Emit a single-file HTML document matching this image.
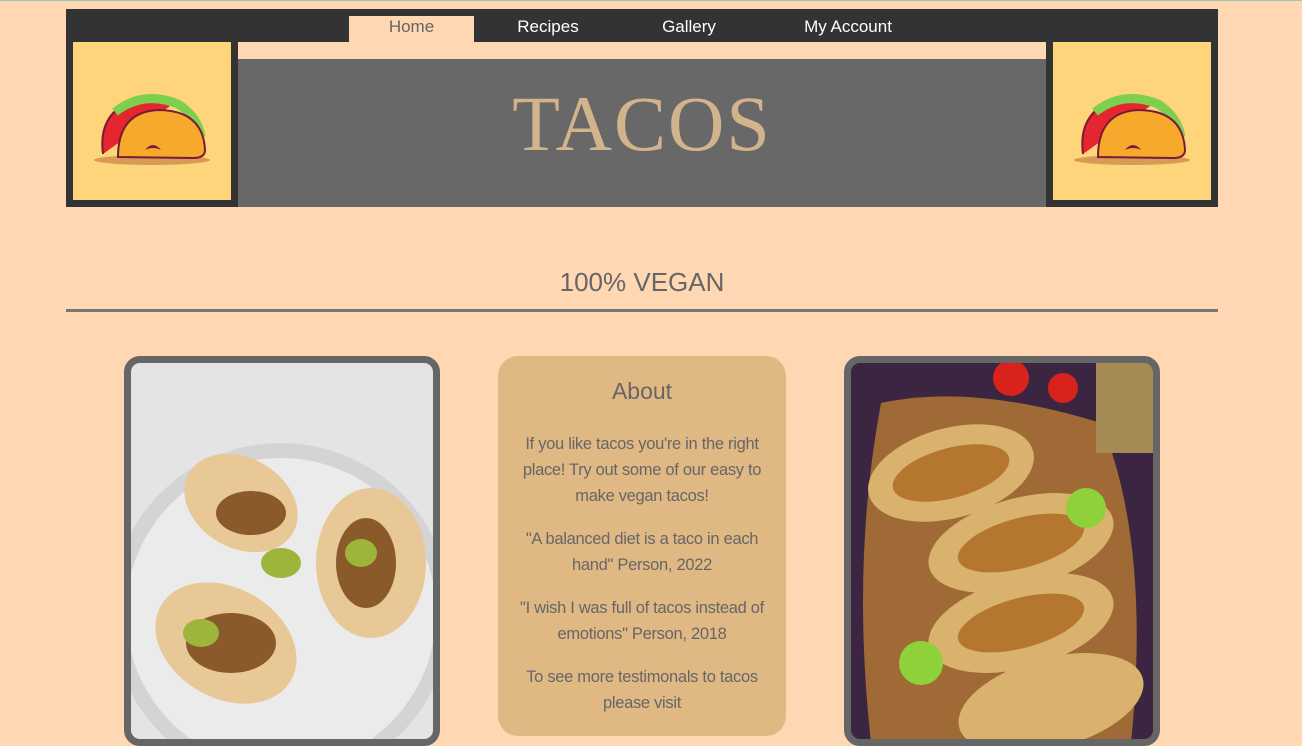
<!DOCTYPE html>
<html><head><meta charset="utf-8"><style>
*{margin:0;padding:0;box-sizing:border-box}
body{width:1302px;height:730px;overflow:hidden;background:#ffd7b3;font-family:"Liberation Sans",sans-serif;color:#666;position:relative}
.abs{position:absolute}
.nav{left:66px;top:9px;width:1152px;height:33px;background:#333}
.nav span{position:absolute;top:8px;font-size:17px;color:#fff;text-align:center}
.tab{left:349px;top:16px;width:125px;height:26px;background:#ffd7b3}
.dark{background:#333}
h1{position:absolute;left:238px;top:79px;width:808px;text-align:center;font-family:"Liberation Serif",serif;font-weight:normal;font-size:78px;color:#d2b48c;letter-spacing:2px}
.card{border:7px solid #666;border-radius:16px;overflow:hidden;background:#666}
.about{left:498px;top:356px;width:288px;height:380px;background:#e0b884;border-radius:20px;text-align:center;padding:0 12px}
.about h3{font-weight:normal;font-size:23px;margin-top:22px;margin-bottom:26px}
.about p{font-size:16.5px;line-height:26px;margin-bottom:17px;letter-spacing:-0.3px}
</style></head><body>
<div class="abs" style="left:0;top:0;width:1302px;height:1px;background:#9cc7b0"></div>
<div class="abs nav">
<span style="left:432px;width:100px">Recipes</span>
<span style="left:573px;width:100px">Gallery</span>
<span style="left:722px;width:120px">My Account</span>
</div>
<div class="abs tab"><span style="position:absolute;top:1px;left:0;width:125px;text-align:center;font-size:17px;color:#666">Home</span></div>
<div class="abs dark" style="left:66px;top:42px;width:172px;height:165px"></div>
<div class="abs dark" style="left:1046px;top:42px;width:172px;height:165px"></div>
<div class="abs" style="left:238px;top:59px;width:808px;height:148px;background:#686868"></div>
<h1>TACOS</h1>
<svg class="abs" style="left:73px;top:42px" width="158" height="158" viewBox="0 0 158 158"><rect width="158" height="158" fill="#ffd57c"/>
<ellipse cx="79" cy="118" rx="58" ry="5" fill="#d99a55"/>
<path d="M30 112 Q25 75 55 60 Q80 52 100 62" fill="#e5262f" stroke="#7a1a3a" stroke-width="2"/>
<path d="M42 70 Q70 48 105 62 Q125 75 128 95" fill="none" stroke="#7ccf4f" stroke-width="9"/>
<path d="M45 115 Q45 70 85 68 Q130 68 132 108 Q132 116 120 116 Z" fill="#f7a92c" stroke="#7a1a3a" stroke-width="2"/>
<path d="M72 108 Q80 98 88 108 Q80 104 72 108Z" fill="#7a1a3a"/>
</svg>
<svg class="abs" style="left:1053px;top:42px" width="158" height="158" viewBox="0 0 158 158"><rect width="158" height="158" fill="#ffd57c"/>
<ellipse cx="79" cy="118" rx="58" ry="5" fill="#d99a55"/>
<path d="M30 112 Q25 75 55 60 Q80 52 100 62" fill="#e5262f" stroke="#7a1a3a" stroke-width="2"/>
<path d="M42 70 Q70 48 105 62 Q125 75 128 95" fill="none" stroke="#7ccf4f" stroke-width="9"/>
<path d="M45 115 Q45 70 85 68 Q130 68 132 108 Q132 116 120 116 Z" fill="#f7a92c" stroke="#7a1a3a" stroke-width="2"/>
<path d="M72 108 Q80 98 88 108 Q80 104 72 108Z" fill="#7a1a3a"/>
</svg>
<div class="abs" style="left:66px;top:267px;width:1152px;text-align:center;font-size:26px;color:#666">100% VEGAN</div>
<div class="abs" style="left:66px;top:309px;width:1152px;height:3px;background:#777"></div>

<div class="abs card" style="left:124px;top:356px;width:316px;height:390px">
<svg width="302" height="380" viewBox="0 0 302 380"><rect width="302" height="380" fill="#e4e4e4"/>
<ellipse cx="150" cy="250" rx="170" ry="170" fill="#d4d4d4"/>
<ellipse cx="150" cy="250" rx="155" ry="155" fill="#ebebeb"/>
<ellipse cx="110" cy="140" rx="60" ry="45" fill="#e8c896" transform="rotate(30 110 140)"/>
<ellipse cx="240" cy="200" rx="55" ry="75" fill="#e8c896"/>
<ellipse cx="95" cy="280" rx="75" ry="55" fill="#e8c896" transform="rotate(30 95 280)"/>
<ellipse cx="120" cy="150" rx="35" ry="22" fill="#8a5a2a"/>
<ellipse cx="235" cy="200" rx="30" ry="45" fill="#8a5a2a"/>
<ellipse cx="100" cy="280" rx="45" ry="30" fill="#8a5a2a"/>
<ellipse cx="150" cy="200" rx="20" ry="15" fill="#9cb53a"/>
<ellipse cx="230" cy="190" rx="16" ry="14" fill="#9cb53a"/>
<ellipse cx="70" cy="270" rx="18" ry="14" fill="#9cb53a"/>
</svg></div>

<div class="abs about">
<h3>About</h3>
<p>If you like tacos you're in the right place! Try out some of our easy to make vegan tacos!</p>
<p>"A balanced diet is a taco in each hand" Person, 2022</p>
<p>"I wish I was full of tacos instead of emotions" Person, 2018</p>
<p>To see more testimonals to tacos please visit</p>
</div>

<div class="abs card" style="left:844px;top:356px;width:316px;height:390px">
<svg width="302" height="380" viewBox="0 0 302 380"><rect width="302" height="380" fill="#3b2540"/>
<path d="M30 40 Q120 20 250 60 Q300 180 280 380 L20 380 Q0 200 30 40Z" fill="#a06a36"/>
<ellipse cx="100" cy="110" rx="85" ry="45" fill="#d9b26e" transform="rotate(-15 100 110)"/>
<ellipse cx="170" cy="180" rx="95" ry="45" fill="#d9b26e" transform="rotate(-15 170 180)"/>
<ellipse cx="170" cy="260" rx="95" ry="45" fill="#d9b26e" transform="rotate(-15 170 260)"/>
<ellipse cx="200" cy="340" rx="95" ry="45" fill="#d9b26e" transform="rotate(-15 200 340)"/>
<ellipse cx="100" cy="110" rx="60" ry="25" fill="#b5772f" transform="rotate(-15 100 110)"/>
<ellipse cx="170" cy="180" rx="65" ry="25" fill="#b5772f" transform="rotate(-15 170 180)"/>
<ellipse cx="170" cy="260" rx="65" ry="25" fill="#b5772f" transform="rotate(-15 170 260)"/>
<circle cx="235" cy="145" r="20" fill="#8fd13a"/><circle cx="70" cy="300" r="22" fill="#8fd13a"/>
<circle cx="160" cy="15" r="18" fill="#d8221c"/><circle cx="212" cy="25" r="15" fill="#d8221c"/>
<rect x="245" y="0" width="57" height="90" fill="#a58a55"/>
</svg></div>
</body></html>
